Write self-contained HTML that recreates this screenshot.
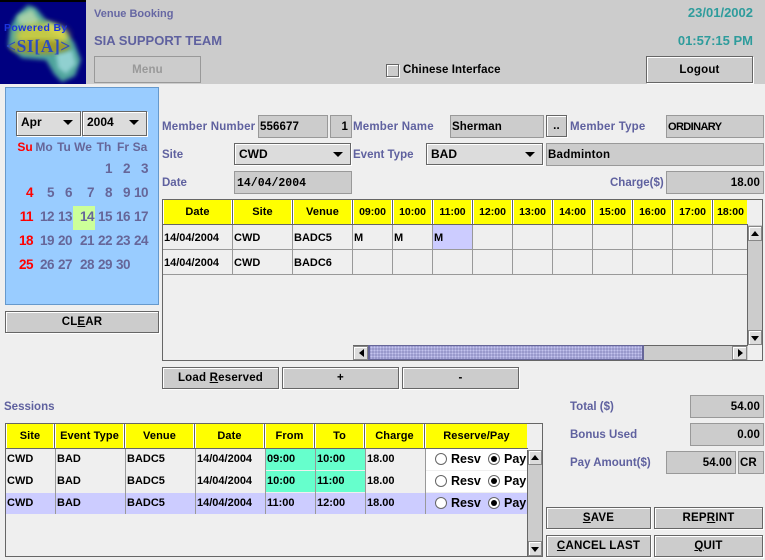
<!DOCTYPE html>
<html><head><meta charset="utf-8"><style>
html,body{margin:0;padding:0}
body{width:765px;height:560px;position:relative;overflow:hidden;background:#efefef;font:bold 11px "Liberation Sans",sans-serif;color:#000}
div,span.t{position:absolute;box-sizing:border-box;white-space:nowrap}
.l{color:#5f619f;font-size:11.5px;letter-spacing:0;line-height:14px}
.ls{letter-spacing:.2px}
.f{background:#ccc;border:1px solid #999;line-height:23px;padding:0 1px;font-size:11.5px;letter-spacing:.1px}
.r{text-align:right;padding-right:3px}
.m{font-family:"Liberation Mono",monospace;font-size:11.5px;letter-spacing:0;padding-left:2px}
.b{background:#ccc;border:1px solid #666;box-shadow:1px 1px 0 #fff,inset 1px 1px 0 #fff;text-align:center;font-size:11.5px;letter-spacing:.2px;line-height:21px}
.c{background:#dcdcdc;border:1px solid #666;box-shadow:1px 1px 0 #fff,inset 1px 1px 0 #fff;font-size:12px;padding-left:4px;line-height:21px}
.c:after{content:"";position:absolute;right:7px;top:8px;border:5px solid transparent;border-top:5px solid #000;border-bottom:0}
.h{background:#ff0;text-align:center;font-size:11px;line-height:25px;letter-spacing:.1px;border-right:1px solid #fff;border-left:1px solid #fff}
.tm{font-size:10.5px;letter-spacing:0}
.x{font-size:11px;letter-spacing:0;line-height:14px}
.g{background:#999}
.d{color:#666699;font-size:13.5px;line-height:16px;text-align:right;width:24px;letter-spacing:-.5px}
.dh{color:#666699;font-size:12px;line-height:14px;text-align:center;width:20px}
.red{color:#f00}
.ar{background:#dcdcdc;border:1px solid #888;box-shadow:inset 1px 1px 0 #fff}
.rad{width:12px;height:12px;border-radius:50%;border:1px solid #666;background:#fff}
.on:after{content:"";position:absolute;left:2px;top:2px;width:6px;height:6px;border-radius:50%;background:#000}
.rt{font-size:12.5px;font-weight:bold;line-height:14px;color:#000}
u{text-decoration:underline}
</style></head><body>

<!-- top bar -->
<div style="left:0;top:0;width:765px;height:84px;background:#ccc"></div>
<div style="left:0;top:0;width:86px;height:84px;background:#000080;overflow:hidden">
<svg width="86" height="84" style="position:absolute;left:0;top:0"><defs><filter id="bl" x="-20%" y="-20%" width="140%" height="140%"><feGaussianBlur stdDeviation="2"/></filter><filter id="bl2" x="-20%" y="-40%" width="140%" height="180%"><feGaussianBlur stdDeviation="3.5"/></filter></defs>
<path d="M28 5L36 8L46 20L60 26L74 42L81 60L75 76L62 82L54 74L46 60L22 58L8 46L10 28L16 16Z" fill="#4fa49c" filter="url(#bl)"/>
<path d="M18 16L32 9L40 22L30 26L18 24Z" fill="#a5d0a8" filter="url(#bl)"/>
<path d="M56 54L72 50L76 64L66 74L58 68Z" fill="#90d0d0" filter="url(#bl)"/>
<path d="M46 22L62 30L66 40L50 32Z" fill="#c8e4b8" filter="url(#bl)"/>
<ellipse cx="42" cy="36" rx="27" ry="13" fill="#d8d038" opacity=".85" filter="url(#bl2)"/>
<ellipse cx="40" cy="47" rx="30" ry="7" fill="#a09828" opacity=".9" filter="url(#bl)"/>
<rect x="0" y="0" width="86" height="2" fill="#000"/>
<text x="4" y="31" font-family="Liberation Sans" font-size="10.5" font-weight="bold" fill="#1c34e0" letter-spacing=".35">Powered By</text>
<text x="6" y="52" font-family="Liberation Serif" font-size="17.5" font-weight="bold" fill="#2c4cc0" letter-spacing=".6">&lt;SI[A]&gt;</text>
</svg></div>

<div class="l" style="left:94px;top:7px;font-size:11px;color:#6667a3">Venue Booking</div>
<div class="l" style="left:94px;top:33px;font-size:13px;line-height:16px;letter-spacing:0">SIA SUPPORT TEAM</div>
<div class="b" style="left:94px;top:56px;width:107px;height:27px;line-height:27px;color:#999;border-color:#999;box-shadow:none">Menu</div>
<div style="left:386px;top:64px;width:13px;height:13px;background:#ccc;border:1px solid #666;box-shadow:1px 1px 0 #fff,inset 1px 1px 0 #fff"></div>
<div class="x" style="left:403px;top:63px;font-size:11.5px;letter-spacing:.1px">Chinese Interface</div>
<div style="left:600px;top:5px;width:153px;text-align:right;color:#2e9c9c;font-size:13px;line-height:16px">23/01/2002</div>
<div style="left:600px;top:33px;width:153px;text-align:right;color:#2e9c9c;font-size:13px;line-height:16px">01:57:15 PM</div>
<div class="b" style="left:646px;top:56px;width:107px;height:27px;line-height:27px">Logout</div>

<!-- calendar -->
<div style="left:5px;top:87px;width:154px;height:218px;background:#99ccff;border:1px solid #6699cc"></div>
<div class="c" style="left:16px;top:111px;width:65px;height:25px">Apr</div>
<div class="c" style="left:82px;top:111px;width:65px;height:25px;padding-left:4px">2004</div>
<div class="dh red" style="left:15px;top:140px">Su</div><div class="dh" style="left:34px;top:140px">Mo</div><div class="dh" style="left:54px;top:140px">Tu</div><div class="dh" style="left:73px;top:140px">We</div><div class="dh" style="left:94px;top:140px">Th</div><div class="dh" style="left:113px;top:140px">Fr</div><div class="dh" style="left:130px;top:140px">Sa</div>
<div style="left:73px;top:206px;width:22px;height:24px;background:#ccff99"></div>
<div class="d" style="left:88px;top:161px">1</div><div class="d" style="left:106px;top:161px">2</div><div class="d" style="left:124px;top:161px">3</div>
<div class="d red" style="left:9px;top:185px">4</div><div class="d" style="left:30px;top:185px">5</div><div class="d" style="left:48px;top:185px">6</div><div class="d" style="left:70px;top:185px">7</div><div class="d" style="left:88px;top:185px">8</div><div class="d" style="left:106px;top:185px">9</div><div class="d" style="left:124px;top:185px">10</div>
<div class="d red" style="left:9px;top:209px">11</div><div class="d" style="left:30px;top:209px">12</div><div class="d" style="left:48px;top:209px">13</div><div class="d" style="left:70px;top:209px">14</div><div class="d" style="left:88px;top:209px">15</div><div class="d" style="left:106px;top:209px">16</div><div class="d" style="left:124px;top:209px">17</div>
<div class="d red" style="left:9px;top:233px">18</div><div class="d" style="left:30px;top:233px">19</div><div class="d" style="left:48px;top:233px">20</div><div class="d" style="left:70px;top:233px">21</div><div class="d" style="left:88px;top:233px">22</div><div class="d" style="left:106px;top:233px">23</div><div class="d" style="left:124px;top:233px">24</div>
<div class="d red" style="left:9px;top:257px">25</div><div class="d" style="left:30px;top:257px">26</div><div class="d" style="left:48px;top:257px">27</div><div class="d" style="left:70px;top:257px">28</div><div class="d" style="left:88px;top:257px">29</div><div class="d" style="left:106px;top:257px">30</div>
<div class="b" style="left:5px;top:311px;width:154px;height:22px">CL<u>E</u>AR</div>

<!-- form -->
<div class="l ls" style="left:162px;top:120px">Member Number</div>
<div class="f" style="left:258px;top:115px;width:70px;height:23px">556677</div>
<div class="f r" style="left:330px;top:115px;width:22px;height:23px">1</div>
<div class="l ls" style="left:353px;top:120px">Member Name</div>
<div class="f" style="left:450px;top:115px;width:94px;height:23px">Sherman</div>
<div class="b" style="left:546px;top:115px;width:21px;height:22px;line-height:21px">..</div>
<div class="l ls" style="left:570px;top:120px">Member Type</div>
<div class="f" style="left:666px;top:115px;width:98px;height:23px;font-size:11px;letter-spacing:-.6px">ORDINARY</div>
<div class="l" style="left:162px;top:148px">Site</div>
<div class="c" style="left:234px;top:143px;width:117px;height:22px;line-height:20px">CWD</div>
<div class="l" style="left:353px;top:148px">Event Type</div>
<div class="c" style="left:426px;top:143px;width:117px;height:22px;line-height:20px">BAD</div>
<div class="f" style="left:546px;top:143px;width:218px;height:23px;letter-spacing:.25px">Badminton</div>
<div class="l" style="left:162px;top:176px">Date</div>
<div class="f m" style="left:234px;top:171px;width:118px;height:23px">14/04/2004</div>
<div class="l" style="left:610px;top:176px">Charge($)</div>
<div class="f r" style="left:666px;top:171px;width:98px;height:23px">18.00</div>

<!-- table 1 -->
<div style="left:162px;top:199px;width:601px;height:162px;border:1px solid #666"></div>
<div class="h" style="left:163px;top:200px;width:69px;height:24px">Date</div>
<div class="h" style="left:233px;top:200px;width:59px;height:24px">Site</div>
<div class="h" style="left:293px;top:200px;width:59px;height:24px">Venue</div>
<div class="h tm" style="left:353px;top:200px;width:39px;height:24px">09:00</div>
<div class="h tm" style="left:393px;top:200px;width:39px;height:24px">10:00</div>
<div class="h tm" style="left:433px;top:200px;width:39px;height:24px">11:00</div>
<div class="h tm" style="left:473px;top:200px;width:39px;height:24px">12:00</div>
<div class="h tm" style="left:513px;top:200px;width:39px;height:24px">13:00</div>
<div class="h tm" style="left:553px;top:200px;width:39px;height:24px">14:00</div>
<div class="h tm" style="left:593px;top:200px;width:39px;height:24px">15:00</div>
<div class="h tm" style="left:633px;top:200px;width:39px;height:24px">16:00</div>
<div class="h tm" style="left:673px;top:200px;width:39px;height:24px">17:00</div>
<div class="h tm" style="left:713px;top:200px;width:34px;height:24px;border-right:0">18:00</div>
<div style="left:163px;top:224px;width:585px;height:1px;background:#666"></div>
<div style="left:232px;top:200px;width:1px;height:25px;background:#666"></div><div style="left:292px;top:200px;width:1px;height:25px;background:#666"></div><div style="left:352px;top:200px;width:1px;height:25px;background:#666"></div><div style="left:392px;top:200px;width:1px;height:25px;background:#666"></div><div style="left:432px;top:200px;width:1px;height:25px;background:#666"></div><div style="left:472px;top:200px;width:1px;height:25px;background:#666"></div><div style="left:512px;top:200px;width:1px;height:25px;background:#666"></div><div style="left:552px;top:200px;width:1px;height:25px;background:#666"></div><div style="left:592px;top:200px;width:1px;height:25px;background:#666"></div><div style="left:632px;top:200px;width:1px;height:25px;background:#666"></div><div style="left:672px;top:200px;width:1px;height:25px;background:#666"></div><div style="left:712px;top:200px;width:1px;height:25px;background:#666"></div>
<div style="left:433px;top:225px;width:39px;height:24px;background:#ccf"></div>
<div class="g" style="left:163px;top:249px;width:585px;height:1px"></div>
<div class="g" style="left:163px;top:274px;width:585px;height:1px"></div>
<div class="g" style="left:232px;top:225px;width:1px;height:50px"></div><div class="g" style="left:292px;top:225px;width:1px;height:50px"></div><div class="g" style="left:352px;top:225px;width:1px;height:50px"></div><div class="g" style="left:392px;top:225px;width:1px;height:50px"></div><div class="g" style="left:432px;top:225px;width:1px;height:50px"></div><div class="g" style="left:472px;top:225px;width:1px;height:50px"></div><div class="g" style="left:512px;top:225px;width:1px;height:50px"></div><div class="g" style="left:552px;top:225px;width:1px;height:50px"></div><div class="g" style="left:592px;top:225px;width:1px;height:50px"></div><div class="g" style="left:632px;top:225px;width:1px;height:50px"></div><div class="g" style="left:672px;top:225px;width:1px;height:50px"></div><div class="g" style="left:712px;top:225px;width:1px;height:50px"></div>
<div class="x" style="left:164px;top:231px">14/04/2004</div><div class="x" style="left:234px;top:231px">CWD</div><div class="x" style="left:294px;top:231px">BADC5</div><div class="x" style="left:354px;top:231px">M</div><div class="x" style="left:394px;top:231px">M</div><div class="x" style="left:434px;top:231px">M</div>
<div class="x" style="left:164px;top:256px">14/04/2004</div><div class="x" style="left:234px;top:256px">CWD</div><div class="x" style="left:294px;top:256px">BADC6</div>

<!-- table1 v scroll -->
<div style="left:747px;top:225px;width:15px;height:120px;background:#ccc;border-left:1px solid #666;border-bottom:1px solid #666"></div>
<div class="ar" style="left:748px;top:226px;width:14px;height:15px"><div style="left:2px;top:4px;border:4px solid transparent;border-bottom:5px solid #000;border-top:0"></div></div>
<div class="ar" style="left:748px;top:330px;width:14px;height:15px"><div style="left:2px;top:5px;border:4px solid transparent;border-top:5px solid #000;border-bottom:0"></div></div>
<!-- table1 h scroll -->
<div style="left:353px;top:345px;width:395px;height:15px;background:#ccc;border-top:1px solid #666"></div>
<div class="ar" style="left:353px;top:346px;width:15px;height:14px"><div style="left:5px;top:2px;border:4px solid transparent;border-right:5px solid #000;border-left:0"></div></div>
<div style="left:368px;top:345px;width:276px;height:15px;background-color:#9999cc;background-image:radial-gradient(circle,#c4c4ee 0.8px,transparent 1px);background-size:3px 3px;border:1px solid #666699;border-width:1px 2px 1px 2px"></div>
<div class="ar" style="left:732px;top:346px;width:15px;height:14px"><div style="left:5px;top:2px;border:4px solid transparent;border-left:5px solid #000;border-right:0"></div></div>

<div class="b" style="left:162px;top:367px;width:117px;height:22px">Load <u>R</u>eserved</div>
<div class="b" style="left:282px;top:367px;width:117px;height:22px">+</div>
<div class="b" style="left:402px;top:367px;width:117px;height:22px">-</div>

<!-- sessions -->
<div class="l" style="left:4px;top:400px">Sessions</div>
<div style="left:5px;top:423px;width:538px;height:134px;border:1px solid #666"></div>
<div class="h" style="left:6px;top:424px;width:48px;height:24px">Site</div>
<div class="h" style="left:55px;top:424px;width:69px;height:24px">Event Type</div>
<div class="h" style="left:125px;top:424px;width:69px;height:24px">Venue</div>
<div class="h" style="left:195px;top:424px;width:69px;height:24px">Date</div>
<div class="h" style="left:265px;top:424px;width:49px;height:24px">From</div>
<div class="h" style="left:315px;top:424px;width:49px;height:24px">To</div>
<div class="h" style="left:365px;top:424px;width:59px;height:24px">Charge</div>
<div class="h" style="left:425px;top:424px;width:102px;height:24px;border-right:0">Reserve/Pay</div>
<div style="left:6px;top:448px;width:522px;height:1px;background:#666"></div>
<div style="left:54px;top:424px;width:1px;height:25px;background:#666"></div><div style="left:124px;top:424px;width:1px;height:25px;background:#666"></div><div style="left:194px;top:424px;width:1px;height:25px;background:#666"></div><div style="left:264px;top:424px;width:1px;height:25px;background:#666"></div><div style="left:314px;top:424px;width:1px;height:25px;background:#666"></div><div style="left:364px;top:424px;width:1px;height:25px;background:#666"></div><div style="left:424px;top:424px;width:1px;height:25px;background:#666"></div>

<div style="left:6px;top:493px;width:522px;height:21px;background:#ccf"></div>
<div style="left:266px;top:449px;width:99px;height:21px;background:#66ffcc"></div>
<div style="left:266px;top:471px;width:99px;height:21px;background:#66ffcc"></div>
<div style="left:426px;top:449px;width:102px;height:21px;background:#fff"></div>
<div style="left:426px;top:471px;width:102px;height:21px;background:#fff"></div>
<div class="g" style="left:55px;top:449px;width:1px;height:65px"></div><div class="g" style="left:125px;top:449px;width:1px;height:65px"></div><div class="g" style="left:195px;top:449px;width:1px;height:65px"></div><div class="g" style="left:265px;top:449px;width:1px;height:65px"></div><div class="g" style="left:315px;top:449px;width:1px;height:65px"></div><div class="g" style="left:365px;top:449px;width:1px;height:65px"></div><div class="g" style="left:425px;top:449px;width:1px;height:65px"></div>

<div class="x" style="left:7px;top:452px">CWD</div><div class="x" style="left:57px;top:452px">BAD</div><div class="x" style="left:127px;top:452px">BADC5</div><div class="x" style="left:197px;top:452px">14/04/2004</div><div class="x" style="left:267px;top:452px">09:00</div><div class="x" style="left:317px;top:452px">10:00</div><div class="x" style="left:367px;top:452px">18.00</div>
<div class="x" style="left:7px;top:474px">CWD</div><div class="x" style="left:57px;top:474px">BAD</div><div class="x" style="left:127px;top:474px">BADC5</div><div class="x" style="left:197px;top:474px">14/04/2004</div><div class="x" style="left:267px;top:474px">10:00</div><div class="x" style="left:317px;top:474px">11:00</div><div class="x" style="left:367px;top:474px">18.00</div>
<div class="x" style="left:7px;top:496px">CWD</div><div class="x" style="left:57px;top:496px">BAD</div><div class="x" style="left:127px;top:496px">BADC5</div><div class="x" style="left:197px;top:496px">14/04/2004</div><div class="x" style="left:267px;top:496px">11:00</div><div class="x" style="left:317px;top:496px">12:00</div><div class="x" style="left:367px;top:496px">18.00</div>

<div class="rad" style="left:435px;top:453px"></div><div class="rt" style="left:451px;top:452px">Resv</div><div class="rad on" style="left:488px;top:453px"></div><div class="rt" style="left:504px;top:452px">Pay</div>
<div class="rad" style="left:435px;top:475px"></div><div class="rt" style="left:451px;top:474px">Resv</div><div class="rad on" style="left:488px;top:475px"></div><div class="rt" style="left:504px;top:474px">Pay</div>
<div class="rad" style="left:435px;top:497px"></div><div class="rt" style="left:451px;top:496px">Resv</div><div class="rad on" style="left:488px;top:497px"></div><div class="rt" style="left:504px;top:496px">Pay</div>

<div style="left:527px;top:450px;width:15px;height:106px;background:#ccc;border-left:1px solid #666"></div>
<div class="ar" style="left:528px;top:450px;width:14px;height:15px"><div style="left:2px;top:4px;border:4px solid transparent;border-bottom:5px solid #000;border-top:0"></div></div>
<div class="ar" style="left:528px;top:541px;width:14px;height:15px"><div style="left:2px;top:5px;border:4px solid transparent;border-top:5px solid #000;border-bottom:0"></div></div>

<!-- totals -->
<div class="l" style="left:570px;top:400px">Total ($)</div>
<div class="f r" style="left:690px;top:395px;width:74px;height:23px">54.00</div>
<div class="l" style="left:570px;top:428px">Bonus Used</div>
<div class="f r" style="left:690px;top:423px;width:74px;height:23px">0.00</div>
<div class="l" style="left:570px;top:456px">Pay Amount($)</div>
<div class="f r" style="left:666px;top:451px;width:70px;height:23px">54.00</div>
<div class="f" style="left:738px;top:451px;width:26px;height:23px">CR</div>
<div class="b" style="left:546px;top:507px;width:105px;height:22px"><u>S</u>AVE</div>
<div class="b" style="left:654px;top:507px;width:109px;height:22px">REP<u>R</u>INT</div>
<div class="b" style="left:546px;top:535px;width:105px;height:22px"><u>C</u>ANCEL LAST</div>
<div class="b" style="left:654px;top:535px;width:109px;height:22px"><u>Q</u>UIT</div>
</body></html>
